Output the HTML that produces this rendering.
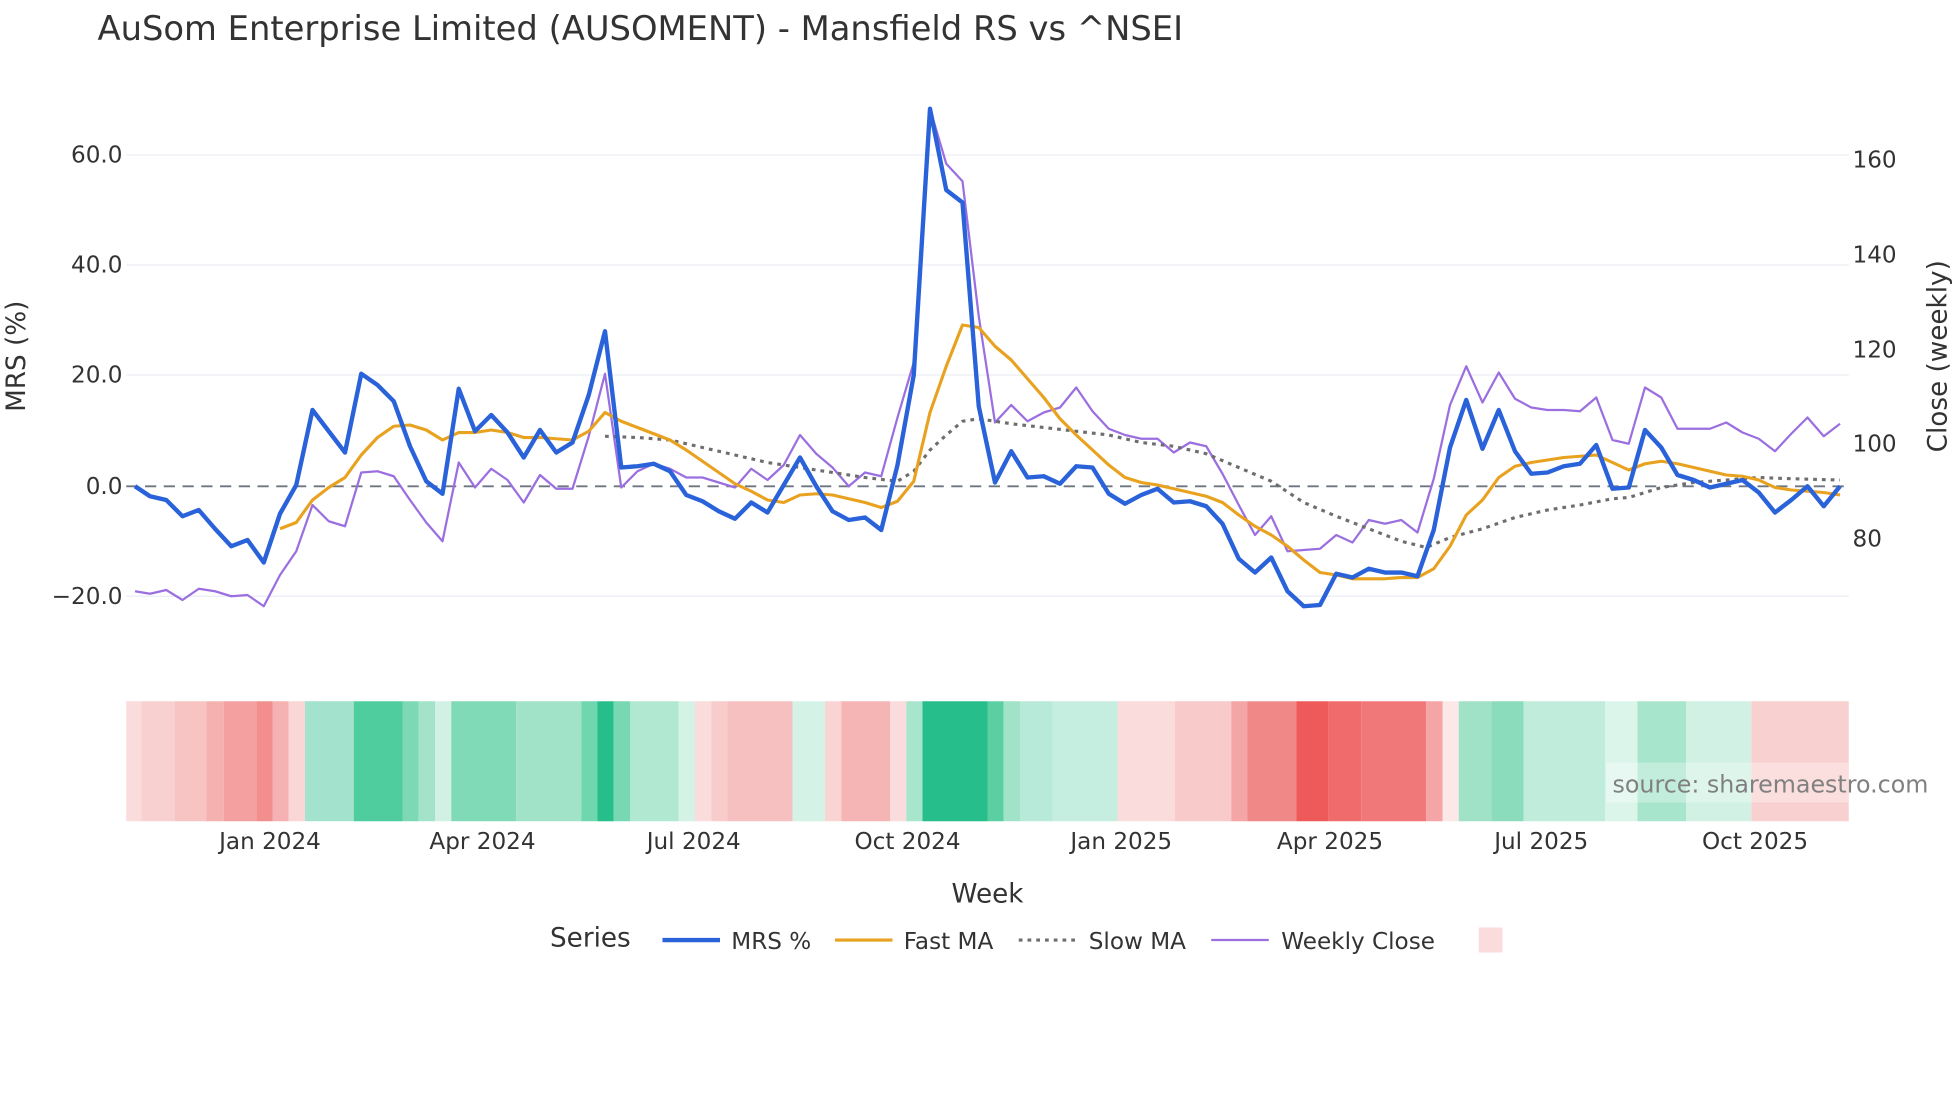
<!DOCTYPE html>
<html><head><meta charset="utf-8"><style>
html,body{margin:0;padding:0;background:#fff;}
svg{display:block;font-family:"DejaVu Sans","Liberation Sans",sans-serif;}
</style></head><body>
<svg width="1960" height="1102" viewBox="0 0 1568 881.6" xmlns="http://www.w3.org/2000/svg">
<rect width="1568" height="882" fill="#fff"/>
<text x="78" y="32" font-size="27" fill="#333">AuSom Enterprise Limited (AUSOMENT) - Mansfield RS vs ^NSEI</text>
<g stroke="#e9eef4" stroke-width="1">
<line x1="101" y1="124" x2="1479" y2="124"/><line x1="101" y1="212" x2="1479" y2="212"/>
<line x1="101" y1="300" x2="1479" y2="300"/><line x1="101" y1="477" x2="1479" y2="477"/>
</g>
<line x1="101" y1="389" x2="1479" y2="389" stroke="#6e7681" stroke-width="1.5" stroke-dasharray="9,6"/>
<g font-size="18.5" fill="#333" text-anchor="end">
<text x="98" y="130">60.0</text><text x="98" y="218">40.0</text><text x="98" y="306">20.0</text><text x="98" y="395">0.0</text><text x="98" y="483">−20.0</text>
</g>
<g font-size="18.5" fill="#333">
<text x="1482" y="134">160</text><text x="1482" y="210">140</text><text x="1482" y="286">120</text><text x="1482" y="361">100</text><text x="1482" y="437">80</text>
</g>
<text transform="translate(20,285) rotate(-90)" font-size="21" fill="#333" text-anchor="middle">MRS (%)</text>
<text transform="translate(1557,285) rotate(-90)" font-size="21" fill="#333" text-anchor="middle">Close (weekly)</text>
<g>
<rect x="101" y="561" width="12" height="96" fill="#fbdcdc"/>
<rect x="113" y="561" width="27" height="96" fill="#f9d0d0"/>
<rect x="140" y="561" width="25" height="96" fill="#f7c3c3"/>
<rect x="165" y="561" width="14" height="96" fill="#f5b0b0"/>
<rect x="179" y="561" width="26" height="96" fill="#f4a0a0"/>
<rect x="205" y="561" width="13" height="96" fill="#f28e8e"/>
<rect x="218" y="561" width="13" height="96" fill="#f6b2b2"/>
<rect x="231" y="561" width="13" height="96" fill="#fad6d6"/>
<rect x="244" y="561" width="39" height="96" fill="#a3e2cc"/>
<rect x="283" y="561" width="39" height="96" fill="#4fcd9f"/>
<rect x="322" y="561" width="13" height="96" fill="#7dd9b5"/>
<rect x="335" y="561" width="13" height="96" fill="#a2e3ca"/>
<rect x="348" y="561" width="13" height="96" fill="#d0f1e4"/>
<rect x="361" y="561" width="52" height="96" fill="#80dab8"/>
<rect x="413" y="561" width="52" height="96" fill="#a0e3c8"/>
<rect x="465" y="561" width="13" height="96" fill="#6fd6ae"/>
<rect x="478" y="561" width="13" height="96" fill="#26be8a"/>
<rect x="491" y="561" width="13" height="96" fill="#78d8b3"/>
<rect x="504" y="561" width="39" height="96" fill="#b0e8d2"/>
<rect x="543" y="561" width="13" height="96" fill="#d4f3e6"/>
<rect x="556" y="561" width="13" height="96" fill="#fbdcdc"/>
<rect x="569" y="561" width="13" height="96" fill="#f9cccc"/>
<rect x="582" y="561" width="52" height="96" fill="#f7c0c0"/>
<rect x="634" y="561" width="26" height="96" fill="#d4f3e6"/>
<rect x="660" y="561" width="13" height="96" fill="#fad3d3"/>
<rect x="673" y="561" width="39" height="96" fill="#f6b5b5"/>
<rect x="712" y="561" width="13" height="96" fill="#fbdcdc"/>
<rect x="725" y="561" width="13" height="96" fill="#a8e5cd"/>
<rect x="738" y="561" width="52" height="96" fill="#26be8a"/>
<rect x="790" y="561" width="13" height="96" fill="#5ccfa2"/>
<rect x="803" y="561" width="13" height="96" fill="#a0e3c8"/>
<rect x="816" y="561" width="26" height="96" fill="#b8eada"/>
<rect x="842" y="561" width="52" height="96" fill="#c6eee0"/>
<rect x="894" y="561" width="46" height="96" fill="#fbdcdc"/>
<rect x="940" y="561" width="45" height="96" fill="#f8caca"/>
<rect x="985" y="561" width="13" height="96" fill="#f4a5a5"/>
<rect x="998" y="561" width="39" height="96" fill="#f08888"/>
<rect x="1037" y="561" width="26" height="96" fill="#ee5a5a"/>
<rect x="1063" y="561" width="26" height="96" fill="#f06b6b"/>
<rect x="1089" y="561" width="52" height="96" fill="#f17878"/>
<rect x="1141" y="561" width="13" height="96" fill="#f5a5a5"/>
<rect x="1154" y="561" width="13" height="96" fill="#fde8e8"/>
<rect x="1167" y="561" width="26" height="96" fill="#9fe2c8"/>
<rect x="1193" y="561" width="26" height="96" fill="#8adcbc"/>
<rect x="1219" y="561" width="65" height="96" fill="#c0ecdc"/>
<rect x="1284" y="561" width="26" height="96" fill="#dcf5eb"/>
<rect x="1310" y="561" width="39" height="96" fill="#a8e5cd"/>
<rect x="1349" y="561" width="52" height="96" fill="#d0f1e4"/>
<rect x="1401" y="561" width="78" height="96" fill="#f9d0d0"/>
</g>
<rect x="1285" y="610" width="194" height="32" fill="#fff" opacity="0.3"/>
<text x="1290" y="634" font-size="19" fill="#808080">source: sharemaestro.com</text>
<g font-size="18.5" fill="#333" text-anchor="middle">
<text x="216" y="679">Jan 2024</text><text x="386" y="679">Apr 2024</text><text x="555" y="679">Jul 2024</text><text x="726" y="679">Oct 2024</text>
<text x="897" y="679">Jan 2025</text><text x="1064" y="679">Apr 2025</text><text x="1233" y="679">Jul 2025</text><text x="1404" y="679">Oct 2025</text>
</g>
<text x="790" y="722" font-size="21" fill="#333" text-anchor="middle">Week</text>
<g fill="none" stroke-linejoin="round">
<polyline stroke="#9b6fe0" stroke-width="1.8" points="108,473 120,475 133,472 146,480 159,471 172,473 185,477 198,476 211,485 224,460 237,441 250,404 263,417 276,421 289,378 302,377 315,381 328,400 341,418 354,433 367,370 380,390 393,375 406,384 419,402 432,380 445,391 458,391 471,349 484,299 497,390 510,377 523,371 536,375 549,382 562,382 575,386 588,390 601,375 614,384 627,372 640,348 653,363 666,374 679,389 692,378 705,381 718,334 731,290 744,87 757,131 770,145 783,253 796,338 809,324 822,337 835,330 848,326 861,310 874,329 887,343 900,348 913,351 926,351 939,362 952,354 965,357 978,379 991,404 1004,428 1017,413 1030,441 1043,440 1056,439 1069,428 1082,434 1095,416 1108,419 1121,416 1134,426 1147,383 1160,324 1173,293 1186,322 1199,298 1212,319 1225,326 1238,328 1251,328 1264,329 1277,318 1290,352 1303,355 1316,310 1329,318 1342,343 1355,343 1368,343 1381,338 1394,346 1407,351 1420,361 1433,347 1446,334 1459,349 1472,339"/>
<polyline stroke="#6e6e6e" stroke-width="2.5" stroke-dasharray="3,4" points="484,349 510,350 536,352 562,358 588,364 614,370 640,374 666,378 692,382 718,385 731,377 744,360 757,348 770,337 783,335 809,339 835,342 861,345 887,348 913,354 939,357 965,363 991,374 1017,385 1043,402 1069,413 1095,423 1121,433 1141,438 1160,430 1186,423 1212,414 1238,408 1264,404 1290,399 1303,398 1329,390 1355,386 1381,384 1407,382 1433,383 1472,384"/>
<polyline stroke="#e8a21f" stroke-width="2.5" points="224,423 237,418 250,400 263,390 276,382 289,364 302,350 315,341 328,340 341,344 354,352 367,346 380,346 393,344 406,346 419,350 432,350 445,351 458,352 471,345 484,330 497,337 510,342 523,347 536,352 549,360 562,369 575,378 588,387 601,393 614,400 627,402 640,396 653,395 666,396 679,399 692,402 705,406 718,401 731,385 744,330 757,293 770,260 783,262 796,277 809,288 822,303 835,318 848,335 861,348 874,360 887,372 900,382 913,386 926,388 939,391 952,394 965,397 978,402 991,412 1004,421 1017,428 1030,437 1043,448 1056,458 1069,460 1082,463 1095,463 1108,463 1121,462 1134,462 1147,455 1160,437 1173,412 1186,400 1199,382 1212,373 1225,370 1238,368 1251,366 1264,365 1277,364 1290,370 1303,376 1316,371 1329,369 1342,371 1355,374 1368,377 1381,380 1394,381 1407,384 1420,390 1433,392 1446,393 1459,394 1472,396"/>
<polyline stroke="#2a62d9" stroke-width="3.5" points="108,389 120,397 133,400 146,413 159,408 172,423 185,437 198,432 211,450 224,411 237,388 250,328 263,345 276,362 289,299 302,308 315,321 328,357 341,385 354,395 367,311 380,345 393,332 406,346 419,366 432,344 445,362 458,354 471,316 484,265 497,374 510,373 523,371 536,377 549,396 562,401 575,409 588,415 601,402 614,410 627,388 640,366 653,389 666,409 679,416 692,414 705,424 718,372 731,300 744,87 757,152 770,162 783,325 796,386 809,361 822,382 835,381 848,387 861,373 874,374 887,395 900,403 913,396 926,391 939,402 952,401 965,405 978,419 991,447 1004,458 1017,446 1030,473 1043,485 1056,484 1069,459 1082,462 1095,455 1108,458 1121,458 1134,461 1147,424 1160,358 1173,320 1186,359 1199,328 1212,361 1225,379 1238,378 1251,373 1264,371 1277,356 1290,391 1303,390 1316,344 1329,358 1342,380 1355,384 1368,390 1381,387 1394,384 1407,394 1420,410 1433,400 1446,389 1459,405 1472,389"/>
</g>
<text x="440" y="757" font-size="21" fill="#333">Series</text>
<line x1="530" y1="752" x2="576" y2="752" stroke="#2a62d9" stroke-width="3.5"/>
<text x="585" y="759" font-size="18.5" fill="#333">MRS %</text>
<line x1="668" y1="752" x2="714" y2="752" stroke="#e8a21f" stroke-width="2.5"/>
<text x="723" y="759" font-size="18.5" fill="#333">Fast MA</text>
<line x1="815" y1="752" x2="861" y2="752" stroke="#6e6e6e" stroke-width="2.5" stroke-dasharray="3,4"/>
<text x="871" y="759" font-size="18.5" fill="#333">Slow MA</text>
<line x1="969" y1="752" x2="1015" y2="752" stroke="#9b6fe0" stroke-width="1.8"/>
<text x="1025" y="759" font-size="18.5" fill="#333">Weekly Close</text>
<rect x="1183" y="742" width="19" height="20" fill="#fbdcdc"/>
</svg>
</body></html>
